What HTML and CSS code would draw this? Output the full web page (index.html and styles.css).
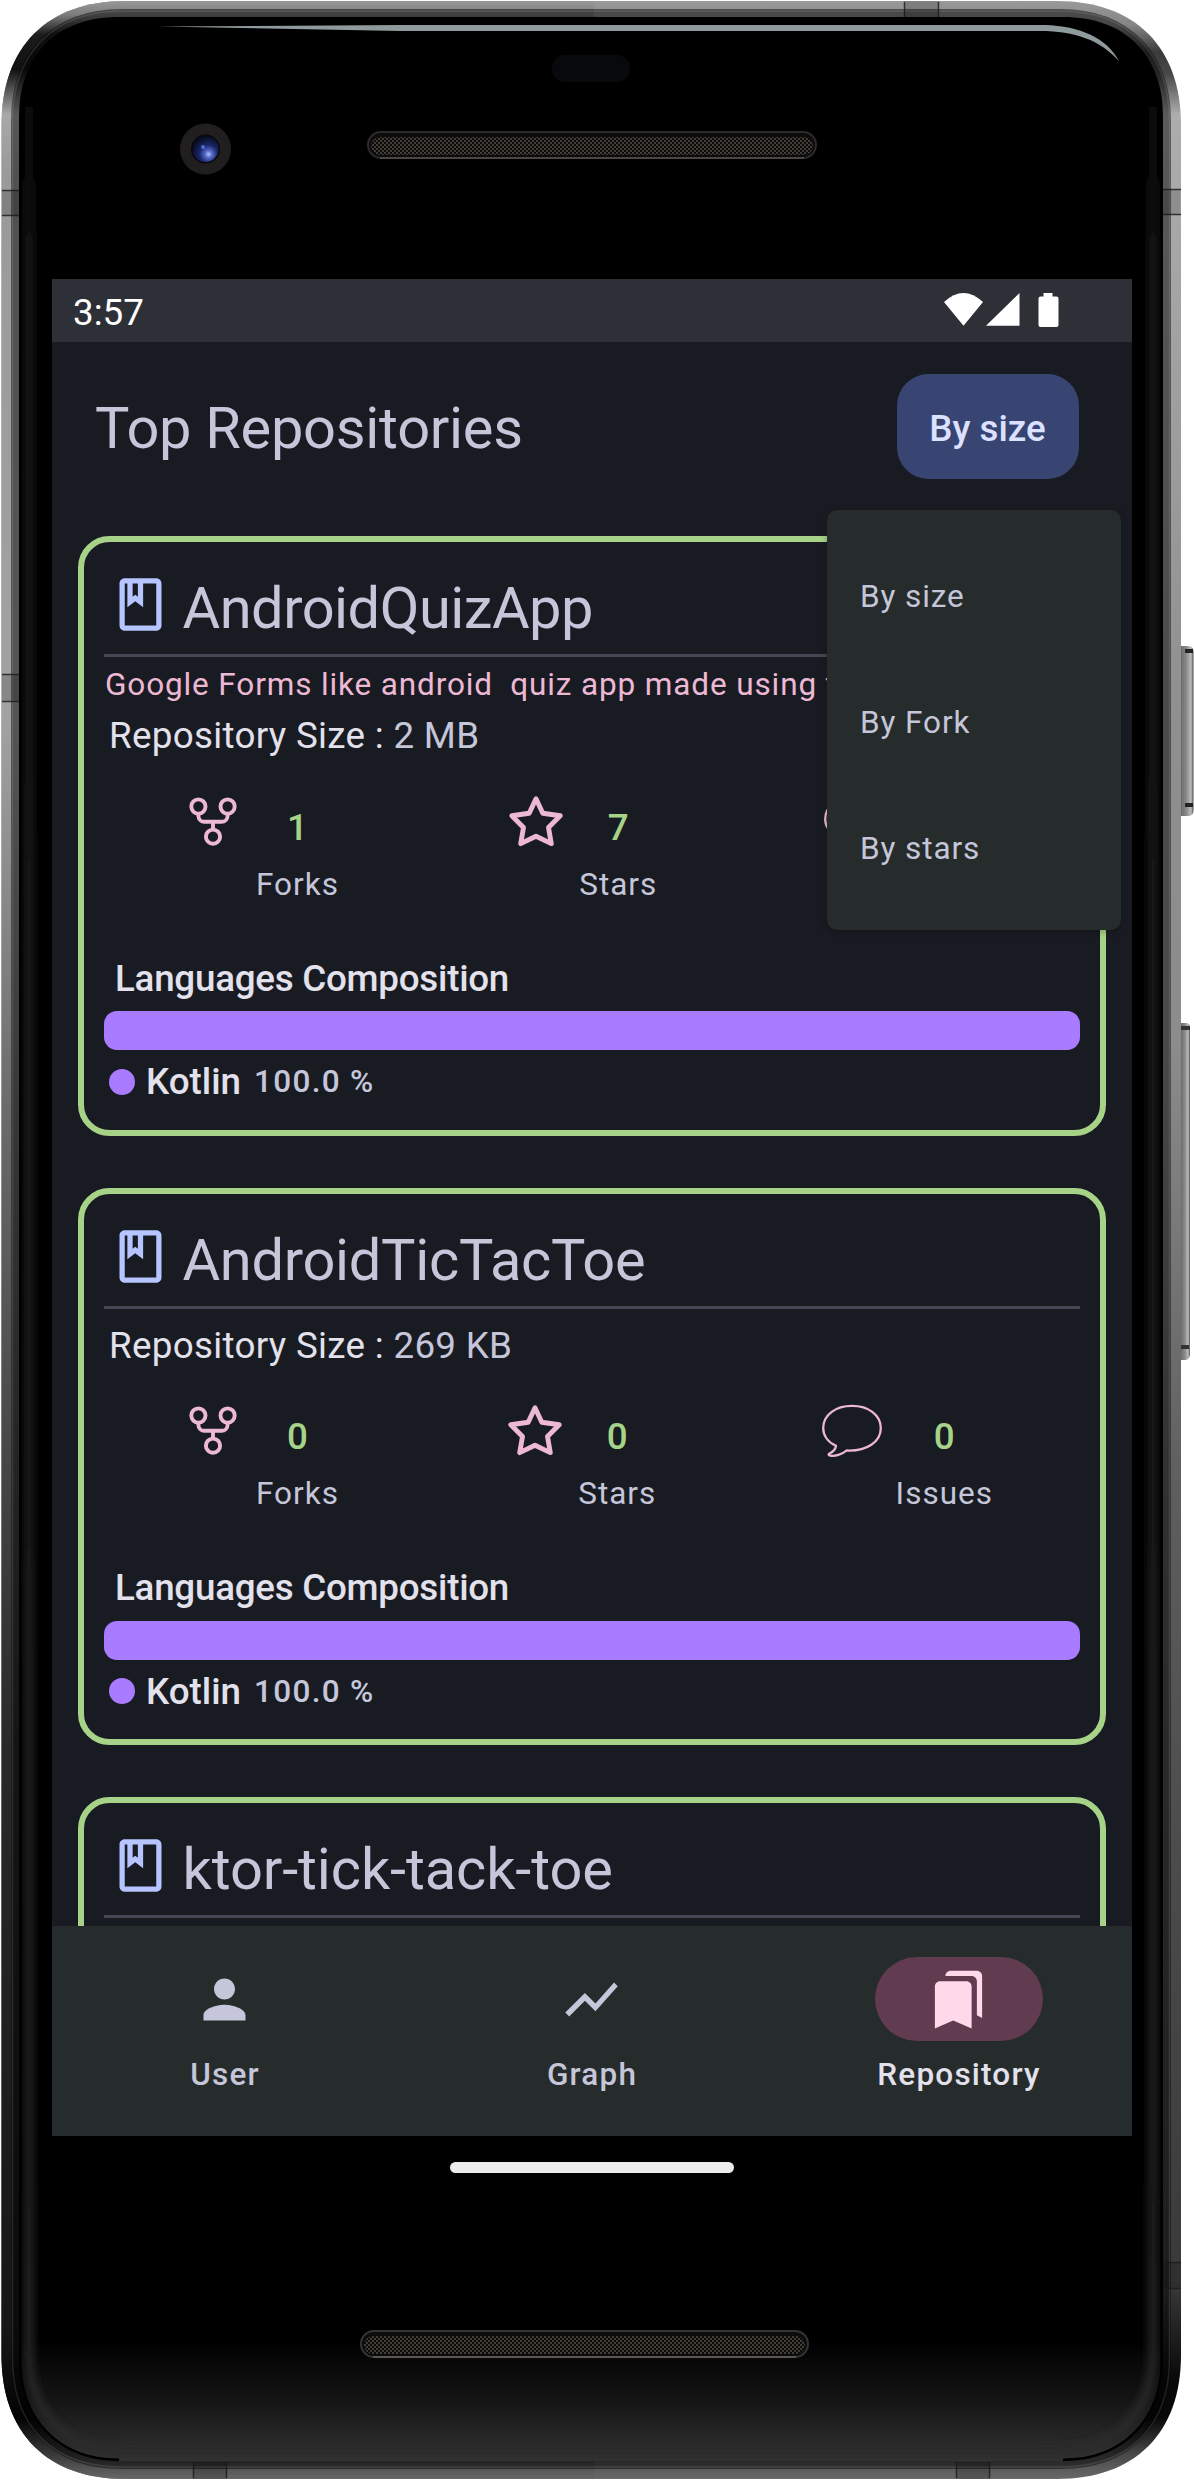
FILE: index.html
```html
<!DOCTYPE html>
<html lang="en">
<head>
<meta charset="utf-8">
<title>Top Repositories</title>
<link rel="stylesheet" href="styles.css">
</head>
<body>
<div class="phone">
  <svg class="frame" viewBox="0 0 1194 2480" aria-hidden="true">
    <defs>
      <linearGradient id="railLeft" x1="0" y1="0" x2="0" y2="2480" gradientUnits="userSpaceOnUse">
        <stop offset="0" stop-color="#9a9a9a"/><stop offset=".006" stop-color="#7c7c7c"/><stop offset=".014" stop-color="#1c1c1c"/><stop offset=".028" stop-color="#101010"/><stop offset=".046" stop-color="#a8a8a8"/><stop offset=".07" stop-color="#9a9a9a"/><stop offset=".29" stop-color="#a2a2a2"/><stop offset=".45" stop-color="#6a6a6a"/><stop offset=".7" stop-color="#2a2a2a"/><stop offset=".94" stop-color="#161616"/><stop offset=".975" stop-color="#030303"/><stop offset=".99" stop-color="#3a3a3a"/><stop offset="1" stop-color="#6a6a6a"/>
      </linearGradient>
      <linearGradient id="railRight" x1="0" y1="0" x2="0" y2="2480" gradientUnits="userSpaceOnUse">
        <stop offset="0" stop-color="#9a9a9a"/><stop offset=".01" stop-color="#858585"/><stop offset=".021" stop-color="#3a3a3a"/><stop offset=".03" stop-color="#484848"/><stop offset=".046" stop-color="#adadad"/><stop offset=".29" stop-color="#8f8f8f"/><stop offset=".42" stop-color="#8c8c8c"/><stop offset=".6" stop-color="#5e5e5e"/><stop offset=".78" stop-color="#484848"/><stop offset=".92" stop-color="#3a3a3a"/><stop offset=".96" stop-color="#080808"/><stop offset=".975" stop-color="#080808"/><stop offset=".99" stop-color="#4a4a4a"/><stop offset="1" stop-color="#6a6a6a"/>
      </linearGradient>
      <linearGradient id="chin" x1="0" y1="2340" x2="0" y2="2461" gradientUnits="userSpaceOnUse">
        <stop offset="0" stop-color="#000"/><stop offset=".5" stop-color="#151515"/><stop offset="1" stop-color="#323232"/>
      </linearGradient>
      <linearGradient id="glow" x1="0" y1="60" x2="0" y2="2461" gradientUnits="userSpaceOnUse">
        <stop offset="0" stop-color="#000"/><stop offset=".08" stop-color="#1c1c1c"/><stop offset="1" stop-color="#2a2a2a"/>
      </linearGradient>
      <linearGradient id="button" x1="0" x2="1" y1="0" y2="0">
        <stop offset="0" stop-color="#6c6c6c"/><stop offset=".45" stop-color="#8c8c8c"/><stop offset=".8" stop-color="#bdbdbd"/><stop offset="1" stop-color="#4a4a4a"/>
      </linearGradient>
      <radialGradient id="lens" cx=".62" cy=".7" r=".7">
        <stop offset="0" stop-color="#b4c4f4"/><stop offset=".2" stop-color="#5468c8"/><stop offset=".5" stop-color="#1a2668"/><stop offset="1" stop-color="#060a1c"/>
      </radialGradient>
      <pattern id="mesh" width="4" height="4" patternUnits="userSpaceOnUse">
        <rect width="4" height="4" fill="#0c0b0a"/><circle cx="1" cy="1" r=".9" fill="#5a544a"/><circle cx="3" cy="3" r=".9" fill="#5a544a"/>
      </pattern>
      <clipPath id="leftHalf"><rect width="594" height="2480"/></clipPath>
      <clipPath id="glassClip"><path d="M119 17H1063C1127 17 1163 57 1163 117V2361C1163 2421 1123 2461 1063 2461H119C59 2461 19 2421 19 2361V117C19 57 55 17 119 17Z"/></clipPath>
      <filter id="soft"><feGaussianBlur stdDeviation="4"/></filter>
    </defs>
    <path d="M125 1H1057C1135 1 1181 47 1181 125V2355C1181 2433 1135 2479 1057 2479H125C47 2479 1.500 2433 1.500 2355V125C1.500 47 47 1 125 1Z" fill="url(#railRight)"/>
    <path clip-path="url(#leftHalf)" d="M125 1H1057C1135 1 1181 47 1181 125V2355C1181 2433 1135 2479 1057 2479H125C47 2479 1.500 2433 1.500 2355V125C1.500 47 47 1 125 1Z" fill="url(#railLeft)"/>
    <path d="M122 13H1060C1128 13 1167 56 1167 121V2358C1167 2425 1127 2465 1060 2465H122C55 2465 15 2425 15 2358V121C15 56 54 13 122 13Z" fill="none" stroke="#000" stroke-opacity=".48" stroke-width="8"/>
    <path d="M122 11H1060C1130 11 1169.500 55 1169.500 121V2358C1169.500 2427 1129 2467 1060 2467H122C53 2467 12.500 2427 12.500 2358V121C12.500 54 53 11 122 11Z" fill="none" stroke="#bbb" stroke-opacity=".16" stroke-width="1.500"/>
    <g fill="#000" fill-opacity=".16">
      <path d="M2 190h17v26H2zM2 674h17v27H2zM1163 189h17.500v26H1163zM1163 2262h17.500v26H1163zM904 1h35v16h-35zM193 2462h34v17h-34zM956 2462h34v17h-34z"/>
    </g>
    <path d="M2 190.500h17M2 215.500h17M2 674.500h17M2 701.500h17M1163 189.500h18M1163 214.500h18M1163 2262.500h18M1163 2288.500h18M904.500 2v15M938.500 2v15M193.500 2462v16M226.500 2462v16M956.500 2462v16M989.500 2462v16" stroke="#1a1a1a" stroke-opacity=".8" stroke-width="1.500"/>
    <g clip-path="url(#glassClip)">
      <rect x="19" y="17" width="1144" height="2444" fill="#000"/>
      <rect x="19" y="2340" width="1144" height="121" fill="url(#chin)"/>
      <path d="M29 80V2351C29 2415 66 2451 129 2451H1053C1113 2451 1153 2415 1153 2351V80" fill="none" stroke="url(#glow)" stroke-width="8" filter="url(#soft)"/>
      <path d="M119 2461C59 2461 19 2421 19 2361V117M1163 117V2361C1163 2421 1123 2461 1063 2461" fill="none" stroke="#000" stroke-width="5"/>
    </g>
    <path d="M158 26.500L400 25H1045C1080 26 1107 38 1119 61C1100 40 1075 31 1040 31H400Z" fill="#8f9a9c"/>
    <rect x="552" y="55" width="78" height="27" rx="13" fill="#08090d"/>
    <circle cx="205.500" cy="149" r="25.500" fill="#211e1f"/>
    <circle cx="205.500" cy="149" r="14.500" fill="#08080d"/>
    <circle cx="205.500" cy="149" r="13" fill="url(#lens)"/>
    <circle cx="203" cy="147" r="2" fill="#4a6ae0"/>
    <rect x="368" y="132" width="448" height="26" rx="13" fill="#0c0c0c" stroke="#2c2b2b" stroke-width="2"/>
    <rect x="371" y="137" width="442" height="18" rx="9" fill="url(#mesh)"/>
    <path d="M380 158H804" stroke="#55504c" stroke-width="1.500"/>
    <rect x="361" y="2331" width="447" height="26" rx="13" fill="#0c0c0c" stroke="#343434" stroke-width="2"/>
    <rect x="364" y="2336" width="441" height="18" rx="9" fill="url(#mesh)"/>
    <path d="M373 2357H796" stroke="#66635c" stroke-width="1.500"/>
    <path d="M1181 646h7q5.500 0 5.500 6v158q0 6-5.500 6h-7z" fill="url(#button)"/>
    <path d="M1185 651h8M1185 805h8" stroke="#222" stroke-width="4"/>
    <path d="M1181 1023h5q4 0 4 5v326q0 5-4 6h-5z" fill="url(#button)"/>
    <path d="M1181 1028h9M1181 1347h8" stroke="#333" stroke-width="4"/>
  </svg>

  <svg class="symbols" aria-hidden="true">
    <symbol id="i-book" viewBox="0 0 24 24"><path d="M18 2H6c-1.100 0-2 .9-2 2v16c0 1.100.9 2 2 2h12c1.100 0 2-.9 2-2V4c0-1.100-.9-2-2-2zM9 4h2v5l-1-.75L9 9V4zm9 16H6V4h1v9l3-2.250L13 13V4h5v16z"/></symbol>
    <symbol id="i-fork" viewBox="0 0 60 60"><g fill="none" stroke="currentColor" stroke-width="3.900"><circle cx="15.400" cy="14.500" r="7.100"/><circle cx="44.600" cy="14.500" r="7.100"/><circle cx="30" cy="44.700" r="7.100"/><path d="M15.400 21.500V24a6 6 0 0 0 6 5.800H38.600a6 6 0 0 0 6-5.800V21.500M30 29.800V37.500"/></g></symbol>
    <symbol id="i-star" viewBox="0 0 60 60"><path d="M30 6.800L36.800 21.300L54.200 23.800L42.500 35.500L45.300 51.600L30 44.200L14.700 51.600L17.500 35.500L5.800 23.800L23.200 21.300Z" fill="none" stroke="currentColor" stroke-width="4.900" stroke-linejoin="round"/></symbol>
    <symbol id="i-issue" viewBox="0 0 60 60"><path d="M14 44.800C5.500 41 1.200 34 1.200 27.200C1.200 14 13.500 4.900 30 4.900C46.500 4.900 58.800 14 58.800 27.200C58.800 40.500 45 50.500 24.500 49.500C20 53.500 13 55.800 7.500 54.300C6.400 54 6.300 53 7.500 52.500C11 51 13.500 48 14 44.800Z" fill="none" stroke="currentColor" stroke-width="2.300" stroke-linejoin="round"/></symbol>
    <symbol id="i-user" viewBox="0 0 24 24"><path d="M12 12c2.210 0 4-1.790 4-4s-1.790-4-4-4-4 1.790-4 4 1.790 4 4 4zm0 2c-2.670 0-8 1.340-8 4v2h16v-2c0-2.660-5.330-4-8-4z"/></symbol>
    <symbol id="i-graph" viewBox="0 0 24 24"><path d="M3.500 18.490l6-6.010 4 4L22 6.920l-1.410-1.410-7.090 7.970-4-4L2 16.990z"/></symbol>
    <symbol id="i-repo" viewBox="0 0 24 24"><path d="M19 18l2 1V3c0-1.100-.9-2-2-2H8.990C7.890 1 7 1.900 7 3h10c1.100 0 2 .9 2 2v13zM15 5H5c-1.100 0-2 .9-2 2v16l7-3 7 3V7c0-1.100-.9-2-2-2z"/></symbol>
  </svg>

  <main class="screen">
    <div class="status">
      <span class="clock">3:57</span>
      <svg class="status-icons" viewBox="0 0 115 34" aria-hidden="true">
        <path d="M0 9Q19.500-9 39 9L19.500 32.700Z"/><path d="M42 32.700L75.500 0V32.700Z"/><path d="M99.500 0h9v3.500h4q2 0 2 2V32q0 2-2 2h-16q-2 0-2-2V5.500q0-2 2-2h3z"/>
      </svg>
    </div>

    <section class="content">
      <header class="header">
        <h1 class="heading">Top Repositories</h1>
        <button class="sort">By size</button>
        <ul class="menu">
          <li class="menu-item">By size</li>
          <li class="menu-item">By Fork</li>
          <li class="menu-item">By stars</li>
        </ul>
      </header>

      <div class="list">
        <article class="card">
          <div class="card-head"><svg class="book"><use href="#i-book"/></svg><h2 class="name name-tight">AndroidQuizApp</h2></div>
          <p class="desc">Google Forms like android&nbsp; quiz app made using t</p>
          <p class="size">Repository Size : <span class="muted">2 MB</span></p>
          <div class="stats">
            <div class="stat"><svg class="stat-icon"><use href="#i-fork"/></svg><div class="stat-text"><span class="count">1</span><span class="label">Forks</span></div></div>
            <div class="stat"><svg class="stat-icon"><use href="#i-star"/></svg><div class="stat-text"><span class="count">7</span><span class="label">Stars</span></div></div>
            <div class="stat stat-covered"><svg class="stat-icon"><use href="#i-issue"/></svg></div>
          </div>
          <h3 class="lang-title">Languages Composition</h3>
          <div class="bar"></div>
          <div class="legend"><i class="dot"></i><span class="lang">Kotlin</span><span class="percent">100.0 %</span></div>
        </article>

        <article class="card">
          <div class="card-head"><svg class="book"><use href="#i-book"/></svg><h2 class="name">AndroidTicTacToe</h2></div>
          <p class="size">Repository Size : <span class="muted">269 KB</span></p>
          <div class="stats">
            <div class="stat"><svg class="stat-icon"><use href="#i-fork"/></svg><div class="stat-text"><span class="count">0</span><span class="label">Forks</span></div></div>
            <div class="stat"><svg class="stat-icon"><use href="#i-star"/></svg><div class="stat-text"><span class="count">0</span><span class="label">Stars</span></div></div>
            <div class="stat"><svg class="stat-icon"><use href="#i-issue"/></svg><div class="stat-text"><span class="count">0</span><span class="label">Issues</span></div></div>
          </div>
          <h3 class="lang-title">Languages Composition</h3>
          <div class="bar"></div>
          <div class="legend"><i class="dot"></i><span class="lang">Kotlin</span><span class="percent">100.0 %</span></div>
        </article>

        <article class="card card-cut">
          <div class="card-head"><svg class="book"><use href="#i-book"/></svg><h2 class="name name-wide">ktor-tick-tack-toe</h2></div>
        </article>
      </div>
    </section>

    <nav class="nav">
      <a class="tab"><span class="pill"><svg class="tab-icon"><use href="#i-user"/></svg></span><span class="tab-label">User</span></a>
      <a class="tab"><span class="pill"><svg class="tab-icon"><use href="#i-graph"/></svg></span><span class="tab-label">Graph</span></a>
      <a class="tab tab-active"><span class="pill"><svg class="tab-icon"><use href="#i-repo"/></svg></span><span class="tab-label">Repository</span></a>
    </nav>
    <div class="gesture"><span class="handle"></span></div>
  </main>
</div>
</body>
</html>
```
FILE: styles.css
```css
* { box-sizing: border-box; }

body {
  margin: 0;
  background: #fff;
  font-family: Roboto, "Liberation Sans", sans-serif;
}

h1, h2, h3, p, ul { margin: 0; padding: 0; font-weight: 400; }

.phone {
  position: relative;
  width: 1194px;
  height: 2480px;
  padding: 279px 62px 0 52px;
  overflow: hidden;
}

.frame { position: absolute; left: 0; top: 0; width: 1194px; height: 2480px; }
.symbols { position: absolute; width: 0; height: 0; }

.screen {
  position: relative;
  display: flex;
  flex-direction: column;
  width: 1080px;
  height: 1920px;
  background: #191b23;
  color: #e2e1ec;
}

.status {
  display: flex;
  align-items: center;
  justify-content: space-between;
  height: 63px;
  padding: 0 73px 0 21px;
  background: #2e3038;
  color: #fff;
}
.clock { padding-top: 4px; font-size: 36.75px; line-height: 59px; }
.status-icons { width: 115px; height: 34px; margin-bottom: 1px; fill: #fff; }

.content { height: 1584px; overflow: hidden; }

.header {
  position: relative;
  display: flex;
  align-items: center;
  justify-content: space-between;
  height: 168px;
  padding: 0 53px 0 43px;
}
.heading, .name { font-size: 57.75px; line-height: 73.500px; color: #c5c6d9; white-space: nowrap; }
.heading { padding-top: 6px; letter-spacing: -.27px; }
.name { padding-top: 10px; letter-spacing: -.3px; }
.name-tight { letter-spacing: -.5px; }
.name-wide { letter-spacing: -.1px; }

.sort {
  width: 182px;
  height: 105px;
  padding: 5px 1px 0 0;
  border: 0;
  border-radius: 31.500px;
  background: #384572;
  color: #dce1ff;
  font: 500 36.75px/52px Roboto, sans-serif;
}

.menu {
  position: absolute;
  left: 775px;
  top: 168px;
  z-index: 2;
  width: 294px;
  padding: 21px 0;
  border-radius: 10.500px;
  background: #262b2b;
  box-shadow: 0 2px 7px rgba(0, 0, 0, .25);
  list-style: none;
}
.menu-item {
  height: 126px;
  padding: 3px 0 0 33px;
  color: #c5c6d9;
  font-size: 31.500px;
  line-height: 126px;
  letter-spacing: .9px;
}

.list { display: flex; flex-direction: column; gap: 52px; padding: 26px 26px 0; }

.card {
  flex: none;
  height: 600px;
  padding: 0 20px;
  border: 6px solid #a7d388;
  border-radius: 31.500px;
}
.card:nth-child(2) { height: 557px; }
.card-cut { height: 400px; }

.card-head {
  display: flex;
  align-items: center;
  gap: 11px;
  height: 115px;
  padding: 12px 0 0 4.500px;
  border-bottom: 3px solid #444653;
}
.book { width: 63px; height: 63px; margin-top: 1px; fill: #b6c4ff; }

.desc {
  height: 43px;
  margin: 6px -20px 0 0;
  padding-left: 1px;
  overflow: hidden;
  color: #edb8d4;
  font-size: 31.500px;
  line-height: 43.500px;
  letter-spacing: .87px;
  white-space: nowrap;
}
.size { height: 60px; padding-left: 5px; font-size: 36.75px; line-height: 60px; letter-spacing: .31px; }
.card-head + .size { margin-top: 6.500px; }
.muted { color: #c5c6d9; }

.stats { display: flex; justify-content: space-between; padding: 25.500px 87px 0 78.500px; }
.stat { display: flex; gap: 13.500px; height: 113px; color: #edb8d4; }
.stat-covered { width: 169px; }
.stat-icon { width: 60px; height: 60px; }
.stat-text { display: flex; flex-direction: column; gap: 10px; align-items: center; padding-top: 10px; }
.count { color: #a7d388; font-size: 36.75px; font-weight: 500; line-height: 52px; }
.label { color: #c5c6d9; font-size: 31.500px; line-height: 42px; letter-spacing: 1px; }

.lang-title {
  height: 52px;
  margin-top: 47px;
  padding-left: 11px;
  font-size: 36.75px;
  font-weight: 500;
  line-height: 53px;
  letter-spacing: -.25px;
}
.bar { height: 39px; margin-top: 7.500px; border-radius: 13px; background: #a87bff; }
.legend { display: flex; align-items: center; height: 52px; margin-top: 5.500px; padding-left: 5px; }
.dot { width: 26px; height: 26px; border-radius: 50%; background: #a87bff; }
.lang { margin-left: 11px; font-size: 36.75px; font-weight: 500; }
.percent { margin-left: 13px; color: #c5c6d9; font-size: 31.500px; font-weight: 500; letter-spacing: 1.300px; }

.nav {
  display: flex;
  gap: 21px;
  height: 210px;
  padding-top: 31px;
  background: #262b2b;
  color: #c5c6d9;
}
.tab { display: flex; flex: 1; flex-direction: column; align-items: center; }
.pill { display: flex; align-items: center; justify-content: center; width: 168px; height: 84px; border-radius: 42px; }
.tab-icon { width: 63px; height: 63px; margin-right: 1px; fill: currentColor; }
.tab-label { margin-top: 12.500px; font-size: 31.500px; font-weight: 500; line-height: 42px; letter-spacing: 1.200px; }
.tab-active { color: #e2e1ec; }
.tab-active .pill { background: #613b50; color: #ffd8e9; }

.gesture { display: flex; flex: 1; justify-content: center; padding-top: 26px; background: #000; }
.handle { width: 284px; height: 11px; border-radius: 6px; background: #ececec; }
```
